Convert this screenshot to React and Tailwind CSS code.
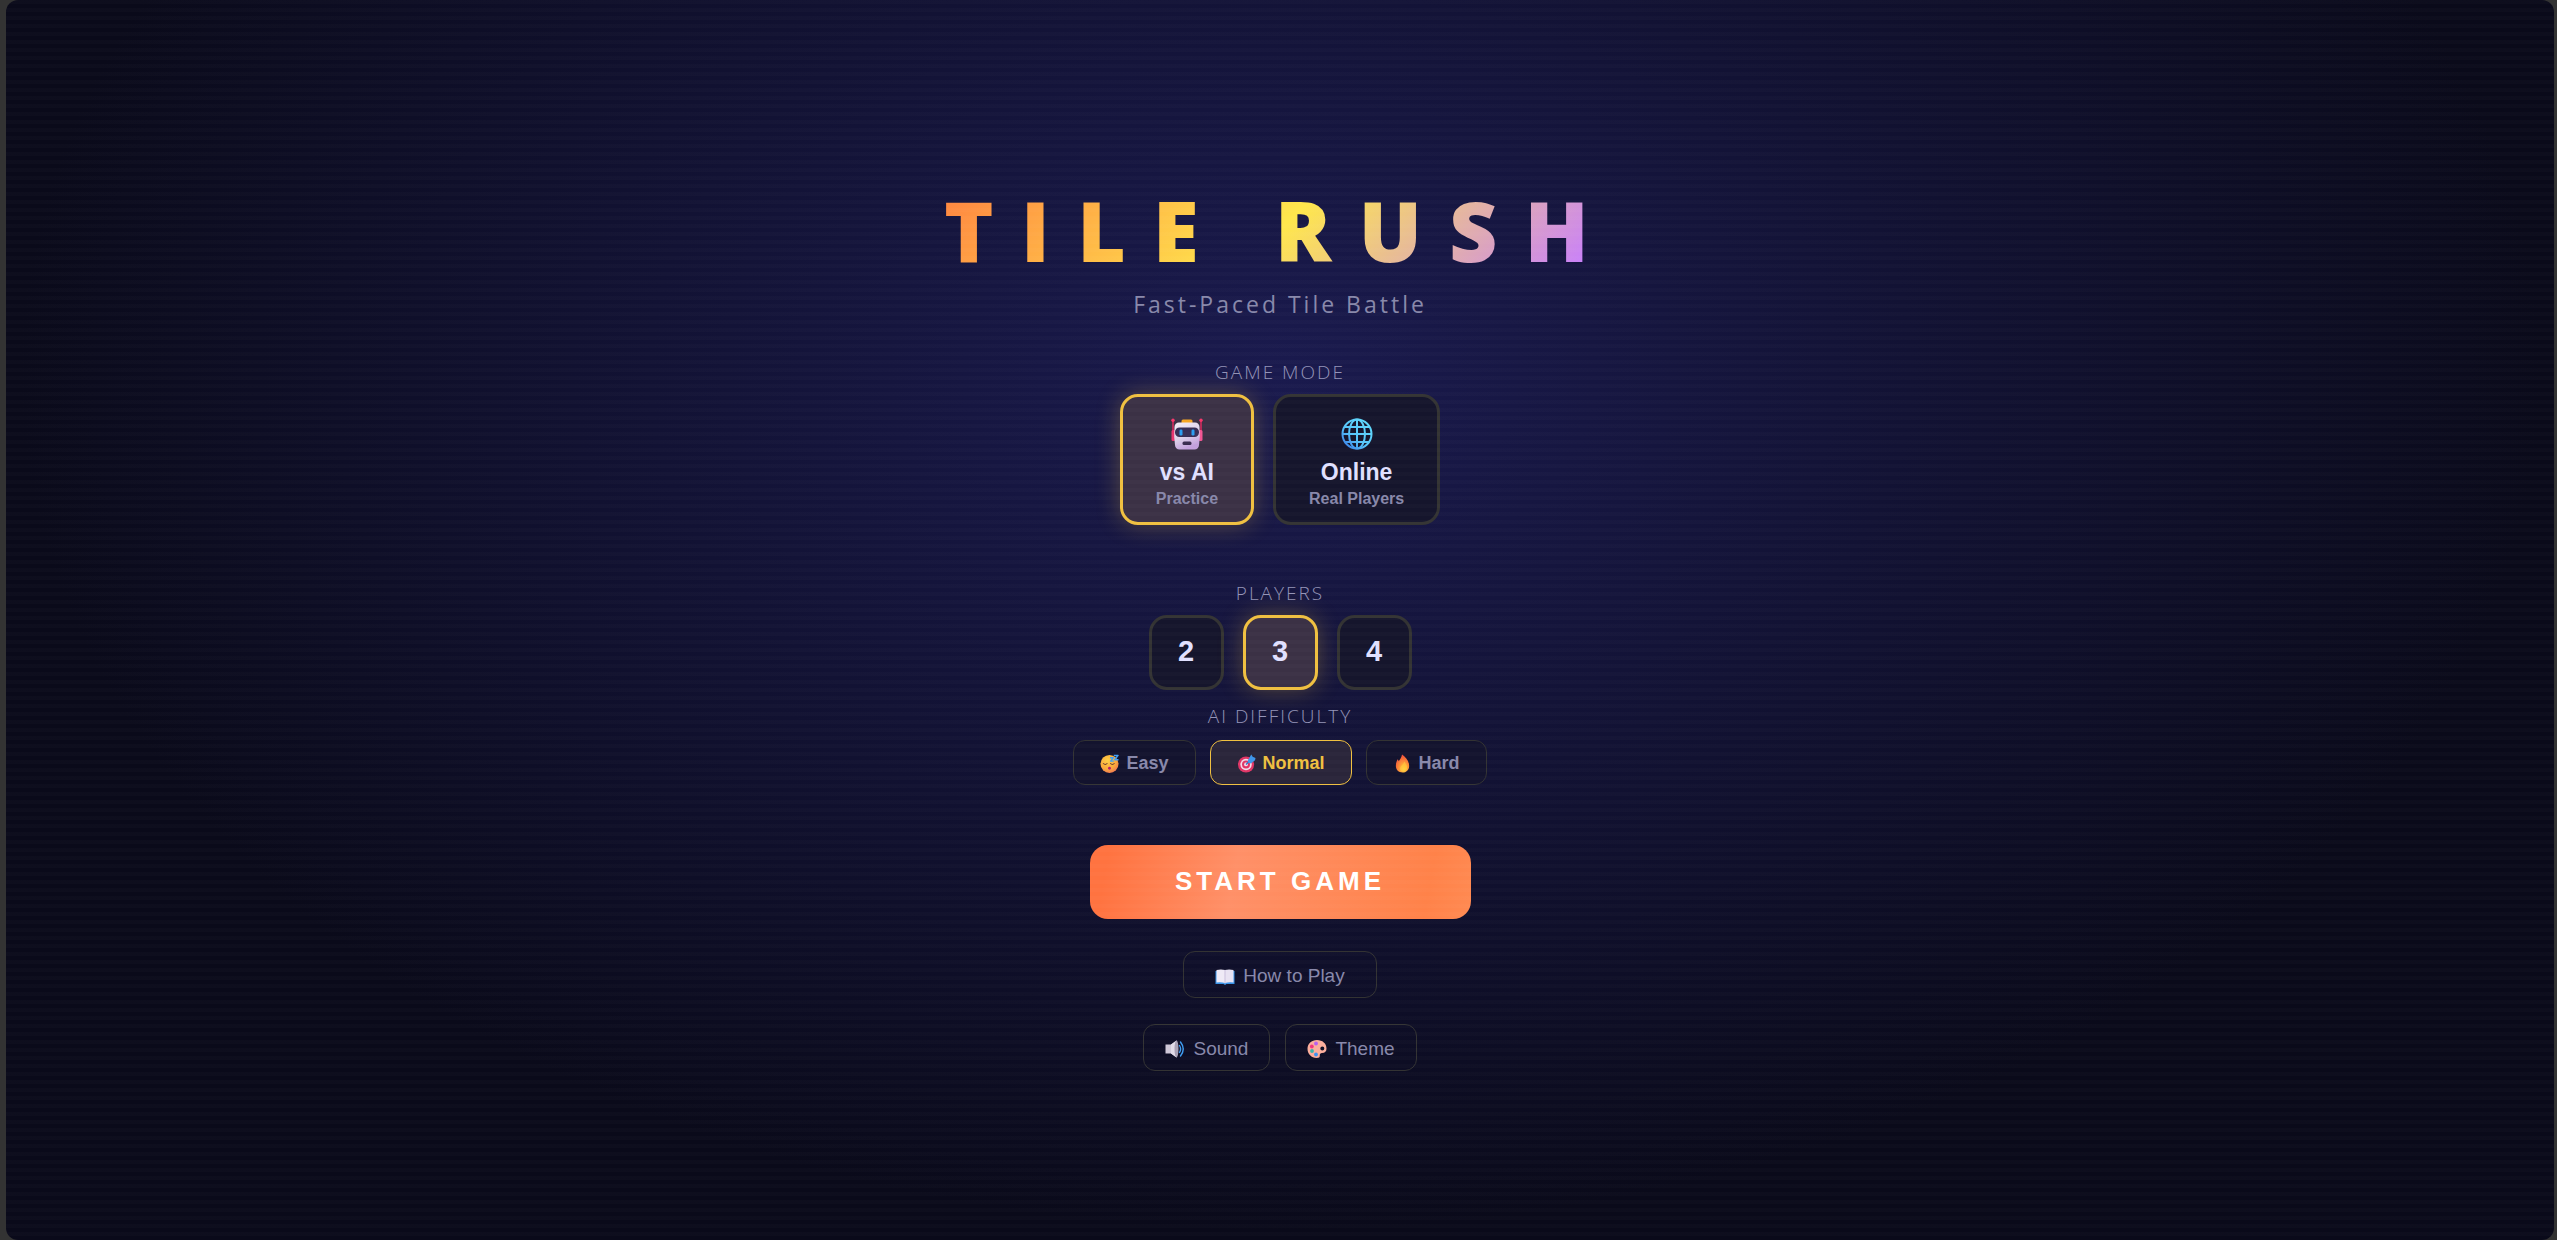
import { useState } from 'react';

const MODES = [
  { id: 'ai', title: 'vs AI', note: 'Practice', Icon: RobotIcon },
  { id: 'online', title: 'Online', note: 'Real Players', Icon: GlobeIcon },
];

const PLAYER_COUNTS = [2, 3, 4];

const LEVELS = [
  { id: 'easy', label: 'Easy', Icon: SleepyIcon },
  { id: 'normal', label: 'Normal', Icon: TargetIcon },
  { id: 'hard', label: 'Hard', Icon: FireIcon },
];

function RobotIcon() {
  return (
    <svg viewBox="0 0 32 32" className="size-8" aria-hidden="true">
      <defs>
        <linearGradient id="robotHead" x1="0" y1="0" x2="0.4" y2="1">
          <stop offset="0" stopColor="#f3edf7" />
          <stop offset="0.6" stopColor="#dcd0e8" />
          <stop offset="1" stopColor="#c3a0dc" />
        </linearGradient>
      </defs>
      <rect x="1.2" y="2" width="1.6" height="14" fill="#d02a5c" />
      <rect x="29.2" y="2" width="1.6" height="14" fill="#d02a5c" />
      <circle cx="2" cy="2.2" r="1.7" fill="#f5376b" />
      <circle cx="30" cy="2.2" r="1.7" fill="#f5376b" />
      <rect x="0.5" y="12" width="4" height="11" rx="1.5" fill="#e8356e" />
      <rect x="27.5" y="12" width="4" height="11" rx="1.5" fill="#f05592" />
      <rect x="10.5" y="1.5" width="11" height="5" rx="1.5" fill="#f5a623" />
      <path d="M8 4.500h16a4.500 4.500 0 0 1 4.500 4.500l.3 10-.8 8a4.500 4.500 0 0 1-4.500 4.500h-15A4.500 4.500 0 0 1 4 27l-.8-8 .3-10A4.500 4.500 0 0 1 8 4.500z" fill="url(#robotHead)" />
      <rect x="4" y="9.500" width="24" height="9.500" rx="4.500" fill="#372f56" />
      <rect x="8.500" y="11.500" width="3" height="6" rx="1.200" fill="#2b9df0" />
      <rect x="20.500" y="11.500" width="3" height="6" rx="1.200" fill="#2b9df0" />
      <rect x="11.500" y="23.500" width="9" height="3.500" rx="1.500" fill="#392b4e" />
    </svg>
  );
}

function GlobeIcon() {
  return (
    <svg viewBox="0 0 32 32" className="size-8" aria-hidden="true">
      <defs>
        <linearGradient id="globeLine" gradientUnits="userSpaceOnUse" x1="26" y1="4" x2="5" y2="28">
          <stop offset="0" stopColor="#5fd8fb" />
          <stop offset="0.6" stopColor="#55c4fa" />
          <stop offset="1" stopColor="#3c86ea" />
        </linearGradient>
      </defs>
      <g fill="none" stroke="url(#globeLine)" strokeWidth="2">
        <circle cx="16" cy="16" r="14.500" />
        <ellipse cx="16" cy="16" rx="8" ry="14.500" />
        <path d="M16 1.500v29M1.500 16h29M4 9h24M4 24h24" />
      </g>
    </svg>
  );
}

function SleepyIcon() {
  return (
    <svg viewBox="0 0 20 20" className="size-[19px]" aria-hidden="true">
      <defs>
        <radialGradient id="sleepyFace" cx="0.4" cy="0.3" r="0.8">
          <stop offset="0" stopColor="#ffd044" />
          <stop offset="0.6" stopColor="#fba83c" />
          <stop offset="1" stopColor="#ee6a55" />
        </radialGradient>
      </defs>
      <circle cx="10" cy="10.500" r="9.500" fill="url(#sleepyFace)" />
      <path d="M3.500 10q2 2 4 0M11 10q2 2 4 0" fill="none" stroke="#6b3a2c" strokeWidth="1.100" strokeLinecap="round" />
      <circle cx="10" cy="15" r="1.500" fill="#b6196c" />
      <path d="M14.500 1.500h4.500l-3.500 4.500h4M10.500 4h3.500l-2.800 3.500h3.300" fill="none" stroke="#3fa0f5" strokeWidth="1.500" strokeLinejoin="round" />
    </svg>
  );
}

function TargetIcon() {
  return (
    <svg viewBox="0 0 20 20" className="size-[19px]" aria-hidden="true">
      <circle cx="9.500" cy="11" r="8.500" fill="#e03566" />
      <circle cx="9.500" cy="11" r="6" fill="#f3dbe9" />
      <circle cx="9.500" cy="11" r="4.200" fill="#e03566" />
      <circle cx="9.500" cy="11" r="2" fill="#f3dbe9" />
      <path d="M9.500 11l5-5" stroke="#2673c8" strokeWidth="1.400" />
      <path d="M11.500 6.500L15 .5l1.500 2.500 3 1.200-.5 2.300L14.500 10l-3-1z" fill="#3f96ea" />
    </svg>
  );
}

function FireIcon() {
  return (
    <svg viewBox="0 0 20 20" className="size-[19px]" aria-hidden="true">
      <defs>
        <radialGradient id="fireBody" cx="0.6" cy="0.8" r="0.8">
          <stop offset="0" stopColor="#ffd23c" />
          <stop offset="0.45" stopColor="#fd9436" />
          <stop offset="1" stopColor="#f0483c" />
        </radialGradient>
      </defs>
      <path d="M9.500.5c3.500 2.500 7.500 6.500 7.500 12 0 4-3 7-7 7s-7-2.800-7-6.800C3 9.500 3.800 7.500 5 5.500c.5.800.8 1.200 1 2C7.500 5.500 9 3.500 9.500.5z" fill="url(#fireBody)" />
      <path d="M12 8c2 3 3.500 4.500 2.500 8-.8 2-2.500 2.800-4.500 2.500-2-.5-3-2-2.500-4C8.200 12 11 11 12 8z" fill="#ffcf3e" opacity="0.55" />
    </svg>
  );
}

function BookIcon() {
  return (
    <svg viewBox="0 0 20 20" className="size-5" aria-hidden="true">
      <path d="M.5 5h19v13h-8l-1.500 1-1.500-1h-8z" fill="#3793e8" />
      <path d="M1.500 4q4.500-1 8.500 0v13q-4-1.200-8.500-.5z" fill="#efeaf6" />
      <path d="M18.500 4q-4.500-1-8.500 0v13q4-1.200 8.500-.5z" fill="#e8e2f2" />
      <path d="M10 4v13.500" stroke="#c9bfdd" strokeWidth="1" />
    </svg>
  );
}

function SpeakerIcon() {
  return (
    <svg viewBox="0 0 20 20" className="size-5" aria-hidden="true">
      <path d="M.5 5.500H6L11.500 1.500v17L6 14.500H.5z" fill="#cfc8d8" />
      <path d="M6 5.500l5.500-4v17L6 14.500z" fill="#e2dce8" />
      <ellipse cx="11.500" cy="10" rx="2" ry="8.500" fill="#a9a1b5" />
      <path d="M14.500 6.500q2.200 3.500 0 7M15.500 3q5.500 7 0 14" fill="none" stroke="#3e9df2" strokeWidth="1.400" strokeLinecap="round" />
    </svg>
  );
}

function PaletteIcon() {
  return (
    <svg viewBox="0 0 20 20" className="size-5" aria-hidden="true">
      <path fillRule="evenodd" d="M10 1C4.500 1 .5 4.800.5 9.800c0 5.200 4 9.200 9 9.200 2.500 0 3.500-.8 3.300-2.500-.2-1.500.7-2.500 2.200-2.500 3 0 4.500-1.700 4.500-4.500C19.500 4.500 15.500 1 10 1zm5.300 6.500a2 2 0 1 1 0 4 2 2 0 0 1 0-4z" fill="#fbae9c" />
      <circle cx="9" cy="4.500" r="1.900" fill="#b65ef0" />
      <circle cx="4.800" cy="7.500" r="1.900" fill="#f0387e" />
      <circle cx="5" cy="12" r="1.900" fill="#35b5ac" />
      <circle cx="9" cy="15.500" r="1.900" fill="#3d92f0" />
    </svg>
  );
}

function SectionLabel({ id, children }) {
  return (
    <h2 id={id} className="font-['Open_Sans','Noto_Sans',sans-serif] text-[19px] leading-6 font-light tracking-[2px] text-[#9494b8] uppercase">
      {children}
    </h2>
  );
}

const CARD_ON = 'border-[#f0c040] bg-[#3b3145] shadow-[0_0_24px_rgba(240,192,64,0.3)]';
const CARD_OFF = 'border-[#333333] bg-[#15152c]';
const LINK_BUTTON = 'flex h-[47px] items-center gap-2 rounded-xl border border-[#333333] pt-1 text-[19px] text-[#8888aa]';

export default function App() {
  const [mode, setMode] = useState('ai');
  const [players, setPlayers] = useState(3);
  const [level, setLevel] = useState('normal');

  return (
    <div className="min-h-screen bg-[#333333] pr-[3px] pl-1.5 font-['Liberation_Sans',Arial,sans-serif]">
      <main className="relative flex min-h-screen flex-col items-center justify-center overflow-hidden rounded-xl bg-[radial-gradient(ellipse_at_50%_30%,#1a1a4e_0%,#0a0a1a_70%)]">
        <h1 className="bg-[linear-gradient(135deg,#ff8040_0%,#ffe74c_50%,#c77dff_94%)] bg-clip-text font-['Open_Sans','Noto_Sans',sans-serif] text-[84px] leading-[120px] font-extrabold tracking-[27px] text-transparent">
          TILE RUSH
        </h1>
        <p className="mt-0.5 font-['Open_Sans','Noto_Sans',sans-serif] text-[23px] leading-6 tracking-[3px] text-[#8888aa]">
          Fast-Paced Tile Battle
        </p>

        {/* Game mode */}
        <section aria-labelledby="mode-label" className="mt-11 flex flex-col items-center gap-2.5">
          <SectionLabel id="mode-label">Game Mode</SectionLabel>
          <div className="flex gap-[19px]">
            {MODES.map(({ id, title, note, Icon }) => (
              <button
                key={id}
                type="button"
                aria-pressed={mode === id}
                onClick={() => setMode(id)}
                className={`flex h-[131px] flex-col items-center rounded-[18px] border-3 px-[33px] pt-[21px] font-bold ${mode === id ? CARD_ON : CARD_OFF}`}
              >
                <Icon />
                <span className="mt-2 text-[23px] leading-7 text-[#e0e0ff]">{title}</span>
                <span className="text-base leading-[26px] text-[#8888aa]">{note}</span>
              </button>
            ))}
          </div>
        </section>

        {/* Player count */}
        <section aria-labelledby="players-label" className="mt-14 flex flex-col items-center gap-2.5">
          <SectionLabel id="players-label">Players</SectionLabel>
          <div className="flex gap-[19px]">
            {PLAYER_COUNTS.map((count) => (
              <button
                key={count}
                type="button"
                aria-pressed={players === count}
                onClick={() => setPlayers(count)}
                className={`size-[75px] rounded-[18px] border-3 text-[29px] font-bold text-[#e0e0ff] ${players === count ? CARD_ON : CARD_OFF}`}
              >
                {count}
              </button>
            ))}
          </div>
        </section>

        {/* Difficulty */}
        <section aria-labelledby="level-label" className="mt-3.5 flex flex-col items-center gap-3">
          <SectionLabel id="level-label">AI Difficulty</SectionLabel>
          <div className="flex gap-3.5">
            {LEVELS.map(({ id, label, Icon }) => (
              <button
                key={id}
                type="button"
                aria-pressed={level === id}
                onClick={() => setLevel(id)}
                className={`flex h-[45px] items-center gap-[7px] rounded-xl border px-[26px] pt-0.5 text-[18px] font-bold ${level === id ? 'border-[#f0c040] bg-[#2a253a] text-[#f0c040]' : 'border-[#333333] bg-[#13132e] text-[#8888aa]'}`}
              >
                <Icon />
                {label}
              </button>
            ))}
          </div>
        </section>

        <button
          type="button"
          className="mt-15 h-[74px] w-[381px] rounded-[18px] bg-[linear-gradient(100deg,#ff7340_5%,#ff9068_38%,#ff8249_88%,#ff8a52_100%)] text-[26px] font-bold tracking-[4px] text-white"
        >
          START GAME
        </button>

        <button type="button" className={`mt-8 px-[31px] ${LINK_BUTTON}`}>
          <BookIcon />
          How to Play
        </button>
        <div className="mt-[26px] flex gap-[15px]">
          <button type="button" className={`px-[21px] ${LINK_BUTTON}`}>
            <SpeakerIcon />
            Sound
          </button>
          <button type="button" className={`px-[21px] ${LINK_BUTTON}`}>
            <PaletteIcon />
            Theme
          </button>
        </div>

        {/* Scanlines */}
        <div className="pointer-events-none absolute inset-0 bg-[repeating-linear-gradient(0deg,transparent_0px,transparent_4px,rgba(255,255,255,0.015)_4px,rgba(255,255,255,0.015)_8px)]" />
      </main>
    </div>
  );
}
